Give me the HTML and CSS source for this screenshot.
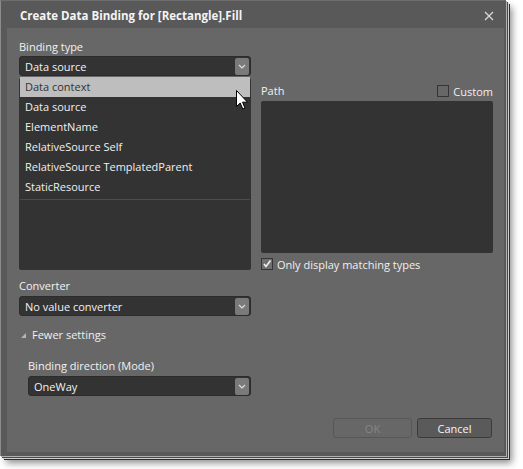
FILE: index.html
```html
<!DOCTYPE html>
<html>
<head>
<meta charset="utf-8">
<link rel="stylesheet" href="styles.css">
</head>
<body>
<div class="window">
  <div class="titlebar">
    <span class="title">Create Data Binding for [Rectangle].Fill</span>
    <svg class="close" width="10" height="10" viewBox="0 0 10 10"><path d="M1 1 L9 9 M9 1 L1 9" stroke="#d8d8d8" stroke-width="1.3" fill="none"/></svg>
  </div>
  <div class="content">
    <div class="label">Binding type</div>
    <div class="combo">
      <span>Data source</span>
      <span class="arrow"><svg width="8" height="5" viewBox="0 0 8 5"><path d="M1 1 L4 4 L7 1" stroke="#e0e0e0" stroke-width="1.2" fill="none"/></svg></span>
    </div>
    <div class="columns">
      <div class="listbox"></div>
      <div class="right">
        <div class="pathhead">
          <span class="label">Path</span>
          <label class="check"><span class="box"></span><span>Custom</span></label>
        </div>
        <div class="pathbox"></div>
        <label class="check matching"><span class="box checked"><svg width="10" height="10" viewBox="0 0 10 10"><path d="M2 5 L4 7.5 L8.5 1.5" stroke="#f0f0f0" stroke-width="1.6" fill="none"/></svg></span><span>Only display matching types</span></label>
      </div>
    </div>
    <div class="label conv-label">Converter</div>
    <div class="combo">
      <span>No value converter</span>
      <span class="arrow"><svg width="8" height="5" viewBox="0 0 8 5"><path d="M1 1 L4 4 L7 1" stroke="#e0e0e0" stroke-width="1.2" fill="none"/></svg></span>
    </div>
    <div class="fewer"><span class="tri"></span><span>Fewer settings</span></div>
    <div class="indent">
      <div class="label">Binding direction (Mode)</div>
      <div class="combo">
        <span>OneWay</span>
        <span class="arrow"><svg width="8" height="5" viewBox="0 0 8 5"><path d="M1 1 L4 4 L7 1" stroke="#e0e0e0" stroke-width="1.2" fill="none"/></svg></span>
      </div>
    </div>
    <div class="buttons">
      <button class="btn disabled">OK</button>
      <button class="btn">Cancel</button>
    </div>
    <ul class="popup">
      <li class="hl">Data context</li>
      <li>Data source</li>
      <li>ElementName</li>
      <li>RelativeSource Self</li>
      <li>RelativeSource TemplatedParent</li>
      <li>StaticResource</li>
    </ul>
    <svg class="cursor" width="13" height="21" viewBox="0 0 13 21"><path d="M0.5 0.5 L0.5 16.5 L4.2 13 L6.8 19 L9 18 L6.5 12.2 L11.5 12.2 Z" fill="#fff" stroke="#000" stroke-width="1" stroke-linejoin="miter"/></svg>
  </div>
</div>
</body>
</html>
```

FILE: styles.css
```css
html, body {
  margin: 0;
  padding: 0;
  background: #ffffff;
}
body {
  font-family: "Open Sans", "Noto Sans", sans-serif;
  font-size: 11px;
  color: #f0f0f0;
  width: 523px;
  height: 469px;
  overflow: hidden;
}
.window {
  width: 505px;
  height: 455px;
  background: #595959;
  border-left: 1px solid #8c8c8c;
  border-top: 1px solid #6e6e6e;
  display: flex;
  flex-direction: column;
  box-shadow: 1px 1px 0 #b0b0b0, 2px 2px 0 #4a4a4a, 3px 3px 0 #cfcfcf, 4px 4px 0 #2e2e2e, 6px 7px 7px rgba(0,0,0,0.45);
}
.titlebar {
  height: 27px;
  display: flex;
  align-items: center;
  justify-content: space-between;
  padding: 0 12px 0 19px;
  flex: none;
}
.title {
  font-weight: bold;
  font-size: 11.5px;
  color: #f4f4f4;
  margin-top: 1px;
}
.close {
  margin-top: 2px;
}
.content {
  position: relative;
  background: #676767;
  margin: 0 2px 4px 6px;
  flex: 1;
  padding: 10px 11px 0 12px;
  display: flex;
  flex-direction: column;
}
.label {
  height: 18px;
  line-height: 18px;
  color: #f2f2f2;
}
.combo {
  height: 20px;
  box-sizing: border-box;
  background: #333333;
  border: 1px solid #2c2c2c;
  border-radius: 3px;
  display: flex;
  align-items: center;
  justify-content: space-between;
  padding: 0 1px 0 5px;
  color: #f2f2f2;
  width: 232px;
}
.arrow {
  width: 14px;
  height: 17px;
  background: #7a7a7a;
  border-radius: 2px;
  display: flex;
  align-items: center;
  justify-content: center;
}
.columns {
  display: flex;
  gap: 10px;
  margin-top: 2px;
}
.listbox {
  width: 232px;
  height: 192px;
  background: #333333;
  border-radius: 2px;
}
.right {
  width: 232px;
  display: flex;
  flex-direction: column;
}
.pathhead {
  display: flex;
  justify-content: space-between;
  align-items: center;
  height: 18px;
  margin-top: 4px;
  margin-bottom: 1px;
}
.check {
  display: flex;
  align-items: center;
  gap: 4px;
}
.box {
  width: 12px;
  height: 12px;
  box-sizing: border-box;
  border: 1px solid #353535;
  display: flex;
  align-items: center;
  justify-content: center;
}
.box.checked {
  background: #6f6f6f;
}
.pathbox {
  height: 152px;
  background: #333333;
  border-radius: 2px;
}
.matching {
  margin-top: 4px;
  height: 14px;
}
.conv-label {
  margin-top: 6px;
  margin-bottom: 1px;
}
.fewer {
  display: flex;
  align-items: center;
  gap: 6px;
  height: 18px;
  margin-top: 9px;
  padding-left: 2px;
}
.tri {
  width: 0;
  height: 0;
  border-left: 5px solid transparent;
  border-bottom: 5px solid #b5b5b5;
  margin-top: 2px;
}
.indent {
  padding-left: 9px;
  margin-top: 14px;
}
.indent .label {
  margin-bottom: 1px;
}
.indent .combo {
  width: 223px;
}
.buttons {
  display: flex;
  justify-content: flex-end;
  gap: 5px;
  margin-top: 22px;
  padding-right: 1px;
}
.btn {
  font-family: inherit;
  font-size: 11px;
  height: 20px;
  box-sizing: border-box;
  border-radius: 3px;
  padding: 0;
  background: #5a5a5a;
  border: 1px solid #3a3a3a;
  color: #f6f6f6;
  width: 75px;
}
.btn.disabled {
  width: 79px;
  background: #676767;
  border-color: #575757;
  color: #858585;
}
.popup {
  position: absolute;
  left: 13px;
  top: 49px;
  width: 230px;
  margin: 0;
  padding: 0 0 2px 0;
  list-style: none;
  background: #333333;
  border-bottom: 1px solid #4c4c4c;
}
.popup li {
  height: 20px;
  line-height: 20px;
  padding-left: 5px;
  color: #f0f0f0;
}
.popup li.hl {
  background: #bebebe;
  color: #333333;
}
.cursor {
  position: absolute;
  left: 229px;
  top: 62px;
}
```
